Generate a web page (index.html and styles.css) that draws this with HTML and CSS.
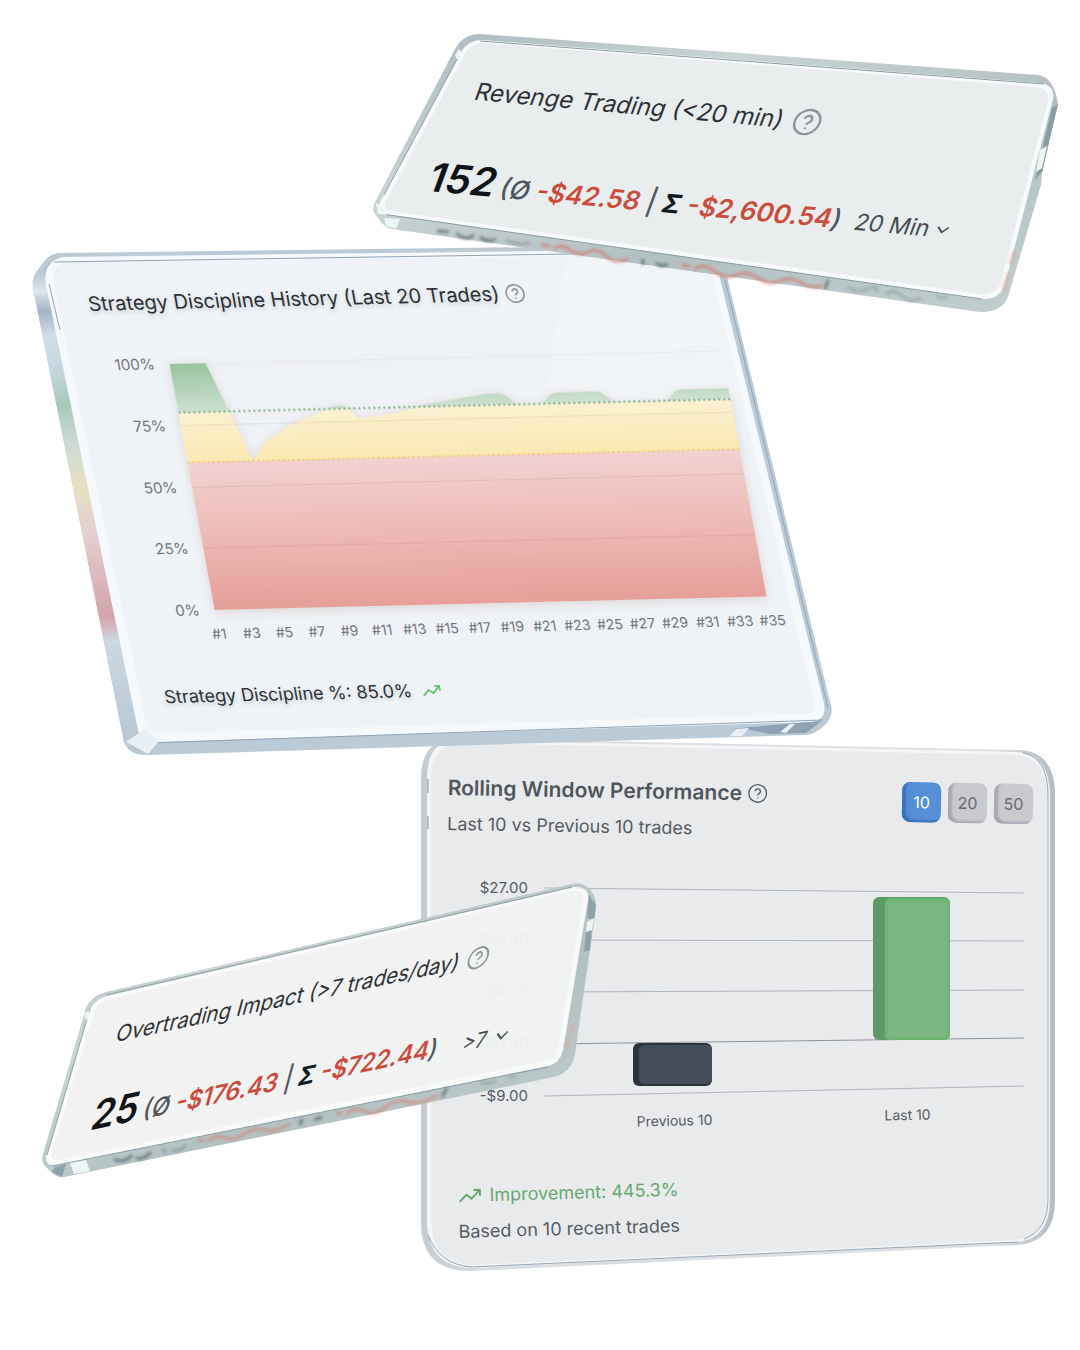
FILE: index.html
```html
<!DOCTYPE html>
<html lang="en">
<head>
    <meta charset="UTF-8">
    <meta name="viewport" content="width=device-width, initial-scale=1.0">
    <title>Trading Insights</title>
    <link rel="stylesheet" href="styles.css">
</head>
<body>
    <svg class="defs" aria-hidden="true">
        <symbol id="help" viewBox="0 0 24 24"><circle cx="12" cy="12" r="10.6"/><path d="M9 9.600a3.100 3.100 0 1 1 4.600 2.700c-1.100.6-1.600 1.100-1.600 2.200M12 16.800v1.400"/></symbol>
        <symbol id="chevron" viewBox="0 0 16 16"><path d="M2 5l6 6 6-6"/></symbol>
        <symbol id="trend" viewBox="0 0 24 16"><path d="M2 14l7-7 5 4 8-8M16 2.500h6.500v6"/></symbol>
        <linearGradient id="steel" x1="0" y1="0" x2="1" y2="1">
            <stop offset="0" stop-color="#a9b7ba"/><stop offset=".3" stop-color="#c9d3d4"/>
            <stop offset=".6" stop-color="#b3c0c2"/><stop offset="1" stop-color="#c2cecf"/>
        </linearGradient>
        <linearGradient id="silver" x1="0" y1="0" x2="1" y2="0">
            <stop offset="0" stop-color="#c3cbd0"/><stop offset=".1" stop-color="#d9dde1"/>
            <stop offset=".9" stop-color="#dfe2e5"/><stop offset="1" stop-color="#b4bbc3"/>
        </linearGradient>
        <linearGradient id="spectrum" x1="0" y1="0" x2="0" y2="1">
            <stop offset="0" stop-color="#a9b9c7"/><stop offset=".06" stop-color="#dbe5ec"/>
            <stop offset=".1" stop-color="#a3b3c2"/><stop offset=".15" stop-color="#d3dee7"/>
            <stop offset=".22" stop-color="#c6d5de"/><stop offset=".29" stop-color="#a6c8b8"/>
            <stop offset=".37" stop-color="#cddad8"/><stop offset=".45" stop-color="#e6e0c3"/>
            <stop offset=".55" stop-color="#e2d0d2"/><stop offset=".72" stop-color="#d5a3ab"/>
            <stop offset=".77" stop-color="#ccd7e0"/><stop offset="1" stop-color="#b7c6d2"/>
        </linearGradient>
        <filter id="soft" x="-5%" y="-40%" width="110%" height="180%"><feGaussianBlur stdDeviation="1.500"/></filter>
    </svg>

    <main class="stage">
        <section class="card rolling">
            <svg class="glass" viewBox="421 736 634 536" preserveAspectRatio="none" aria-hidden="true">
                <path fill="url(#silver)" d="M455 738L1020 750Q1055 752 1055 795V1200Q1055 1242 1018 1245L472 1271Q421 1272 421 1222V778Q421 740 455 738Z"/>
                <path fill="#f3f5f6" d="M455 740L1018 752Q1049 754 1050 795V1200Q1050 1238 1018 1242L472 1268Q428 1267 427 1222V778Q427 742 455 740Z"/>
                <path fill="#e9eaec" d="M460 743L1016 755Q1047 757 1047 796V1199Q1047 1236 1016 1240L474 1265Q432 1264 431 1220V780Q431 744 460 743Z"/>
                <path class="line" stroke="#9aa5b0" d="M1023 753Q1048 757 1048 796V1199Q1048 1230 1024 1239M428 1235Q440 1265 472 1267L1018 1242"/>
                <path class="line" stroke="#7d8792" stroke-width="2" d="M428 779V793M428 816V829"/>
            </svg>
            <header class="rolling-head">
                <div class="rolling-title">
                    <h2>Rolling Window Performance <button class="help" aria-label="About this chart"><svg><use href="#help"/></svg></button></h2>
                    <p>Last 10 vs Previous 10 trades</p>
                </div>
                <div class="sizes">
                    <button class="size active">10</button>
                    <button class="size">20</button>
                    <button class="size">50</button>
                </div>
            </header>
            <div class="rolling-chart">
                <div class="money"><span>$27.00</span><span>$18.00</span><span>$9.00</span><span>$0.00</span><span>-$9.00</span></div>
                <div class="plot">
                    <svg viewBox="544 876 480 232" aria-hidden="true">
                        <g class="line" stroke="#b0b5bc">
                            <path d="M544 888L1024 893M544 940L1024 941M544 992L1024 990M544 1096L1024 1086"/>
                            <path stroke="#8d939d" d="M544 1044L1024 1038"/>
                        </g>
                        <rect x="633" y="1043" width="79" height="43" rx="6" fill="#2c343d"/>
                        <rect x="639" y="1045" width="73" height="39" rx="5" fill="#454e58"/>
                        <rect x="873" y="897" width="77" height="143" rx="6" fill="#5e9969"/>
                        <rect x="885" y="898" width="65" height="142" rx="5" fill="#6cb673"/>
                        <rect x="888" y="901" width="59" height="136" rx="4" fill="#7db685"/>
                    </svg>
                    <div class="groups"><span>Previous 10</span><span>Last 10</span></div>
                </div>
            </div>
            <footer class="rolling-foot">
                <p class="up"><svg class="trend"><use href="#trend"/></svg>Improvement: 445.3%</p>
                <p>Based on 10 recent trades</p>
            </footer>
        </section>

        <section class="card discipline">
            <svg class="glass" viewBox="30 242 804 516" preserveAspectRatio="none" aria-hidden="true">
                <path fill="#bccad5" d="M58 253L700 245Q718 246 723 260L829 698Q836 714 825 725Q816 734 806 735L148 755Q129 756 124 742L33 288Q31 277 40 267Q48 254 58 253Z"/>
                <path fill="url(#spectrum)" d="M50 262L33 280V288L124 742L138 754L148 740L92 497Z"/>
                <path fill="#f6f9fc" d="M62 257L700 249Q712 249 716 262L824 704Q827 719 812 722L158 742Q142 743 138 730L46 285Q42 263 62 257Z"/>
                <path fill="#eff2f6" d="M66 262L698 255Q707 255 710 266L814 702Q816 713 804 714L166 733Q150 734 146 722L54 286Q49 266 66 262Z"/>
                <path fill="#f4f6f9" opacity=".7" d="M566 256L698 255Q707 255 710 266L740 400L546 402Z"/>
                <path class="line" stroke="#8fa3b6" d="M54 262L700 252M725 280L828 708M150 743L823 720"/>
                <path class="line" stroke="#8fa3b6" stroke-width="2" d="M49 284L60 330M735 729L770 727M775 733L808 724"/>
                <path fill="#8ea2b3" d="M740 728L822 721L806 733L770 734Z"/>
                <path fill="#e8f0f5" d="M780 732L790 724L795 724L786 733ZM736 729L749 728L742 736L730 736ZM126 742L146 728L158 742L148 754Z"/>
            </svg>
            <div class="tilt">
                <h2>Strategy Discipline History (Last 20 Trades) <button class="help" aria-label="About this chart"><svg><use href="#help"/></svg></button></h2>
                <div class="history">
                    <div class="percent"><span>100%</span><span>75%</span><span>50%</span><span>25%</span><span>0%</span></div>
                    <svg class="area" viewBox="0 0 552 247" aria-hidden="true">
                        <defs>
                            <clipPath id="trace"><path d="M0 0H36L64 94Q66 100 69 96Q80 78 91 75Q110 63 129 57Q145 51 157 46Q165 44 171 50L179 59Q200 57 219 54Q232 51 246 47L300 39Q325 35 330 41L339 49H364L372 41Q375 38 382 38H420Q424 38 428 42L436 49H490L497 41Q500 38 506 38H552V247H0Z"/></clipPath>
                            <linearGradient id="good" x1="0" y1="0" x2="0" y2="1"><stop offset="0" stop-color="#98c3a0"/><stop offset="1" stop-color="#cfe0d2"/></linearGradient>
                            <linearGradient id="fair" x1="0" y1="0" x2="0" y2="1"><stop offset="0" stop-color="#fbf1d2"/><stop offset="1" stop-color="#f9e9b0"/></linearGradient>
                            <linearGradient id="poor" x1="0" y1="0" x2="0" y2="1"><stop offset="0" stop-color="#f1d2d2"/><stop offset=".4" stop-color="#edbfbc"/><stop offset="1" stop-color="#e69f9a"/></linearGradient>
                        </defs>
                        <path class="line" stroke="#dde1e5" d="M36 0H552"/>
                        <g clip-path="url(#trace)">
                            <rect width="552" height="49" fill="url(#good)"/>
                            <rect y="49" width="552" height="50" fill="url(#fair)"/>
                            <rect y="99" width="552" height="148" fill="url(#poor)"/>
                        </g>
                        <path class="line" stroke="#8a6a6a" opacity=".14" d="M0 62H552M0 124H552M0 185H552"/>
                        <path class="dots" stroke="#7daf88" d="M0 49H552"/>
                        <path class="dots" stroke="#f0cd6b" d="M0 99H552"/>
                    </svg>
                </div>
                <div class="trades">
                    <span>#1</span><span>#3</span><span>#5</span><span>#7</span><span>#9</span><span>#11</span><span>#13</span><span>#15</span><span>#17</span><span>#19</span><span>#21</span><span>#23</span><span>#25</span><span>#27</span><span>#29</span><span>#31</span><span>#33</span><span>#35</span>
                </div>
                <p class="score">Strategy Discipline %: 85.0% <svg class="trend"><use href="#trend"/></svg></p>
            </div>
        </section>

        <section class="card revenge">
            <svg class="glass" viewBox="370 32 690 282" preserveAspectRatio="none" aria-hidden="true">
                <path fill="url(#steel)" d="M480 34L1038 75Q1054 77 1058 104L1042 172L1041 185L1008 297Q1001 313 980 312L392 229Q386 228 381 222L374 213Q372 208 376 200L455 49Q463 34 480 34Z"/>
                <path fill="#f7fafa" d="M482 40L1040 83Q1055 85 1053 99L1005 284Q1000 300 982 299L384 214Q375 212 380 202L461 52Q468 40 482 40Z"/>
                <path fill="#e9edee" d="M484 43L1036 87Q1050 89 1048 101L1001 282Q997 295 980 294L390 211Q382 209 386 201L465 54Q471 43 484 43Z"/>
                <path class="line" stroke="#8d9da1" d="M480 41L1044 84M382 214L982 299M384 195L461 52M1042 172L1050 120"/>
                <path fill="#8b9ca3" d="M1052 108L1058 104L1042 172L1035 180Z"/>
                <path fill="#eef4f4" d="M1040 150L1047 146L1042 168L1036 172ZM376 203L382 206L386 215L378 214ZM384 218L400 219L396 229L386 226ZM455 55L459 49L462 53L457 60Z"/>
                <g class="smudge" filter="url(#soft)">
                    <path stroke="#59656b" d="M437 231L449 232M456 233Q466 242 474 235M480 237Q488 243 496 239"/>
                    <path stroke="#8e999d" d="M506 240Q516 246 530 243"/>
                    <path stroke="#d07c72" d="M541 245L550 246M554 249Q560 243 570 250T588 252T606 256T628 259M682 265L690 266M694 270Q702 262 714 271T736 275T758 278T780 281T802 283T822 285"/>
                    <path stroke="#59656b" d="M643 259V265M656 263Q662 268 668 264M828 280L825 289"/>
                    <path stroke="#98a4a8" d="M848 286Q856 294 868 289T876 292M886 294Q894 288 902 296T922 298M936 295L941 298L948 297"/>
                    <path stroke="#dfa9a2" d="M1015 250L1010 264M1009 272L1003 290"/>
                </g>
            </svg>
            <div class="tilt">
                <h2>Revenge Trading (&lt;20 min) <button class="help" aria-label="About revenge trading"><svg><use href="#help"/></svg></button></h2>
                <div class="figures">
                    <strong>152</strong>
                    <p>(Ø <span class="loss">-$42.58</span> | <b>Σ</b> <span class="loss">-$2,600.54</span>)</p>
                    <label class="pick"><select aria-label="Time window"><option>20 Min</option></select><svg><use href="#chevron"/></svg></label>
                </div>
            </div>
        </section>

        <section class="card overtrading">
            <svg class="glass" viewBox="40 882 558 298" preserveAspectRatio="none" aria-hidden="true">
                <path fill="url(#steel)" fill-rule="evenodd" d="M106 992L572 884Q580 882 586 886Q597 894 596 908L575 1054Q572 1072 554 1077L64 1177Q57 1178 52 1173L44 1165Q41 1161 43 1154L86 1008Q91 996 106 992ZM108 996Q95 999 90 1010L47 1154Q44 1167 56 1165L548 1066Q560 1063 563 1050L588 899Q589 886 574 887Z"/>
                <path fill="#f9fafa" fill-opacity=".88" d="M108 996L574 887Q589 886 588 899L563 1050Q560 1063 548 1066L56 1165Q44 1167 47 1154L90 1010Q95 999 108 996Z"/>
                <path fill="#efefef" fill-opacity=".75" d="M110 999L570 891Q585 889 583 901L558 1048Q556 1059 545 1061L60 1160Q49 1161 52 1152L94 1012Q98 1002 110 999Z"/>
                <path class="line" stroke="#8fa0a4" d="M106 995L572 887M47 1155L90 1009M52 1166L548 1067"/>
                <path fill="#8fa2a8" d="M589 895L596 905L594 920L587 918ZM586 932L592 925L590 950L584 952ZM55 1167L66 1164L62 1177L52 1172Z"/>
                <path fill="#eef4f4" d="M587 922L594 918L592 930L586 932ZM70 1163L86 1160L90 1171L74 1174ZM84 1014L89 1010L90 1017L86 1020Z"/>
                <g class="smudge" filter="url(#soft)">
                    <path stroke="#59656b" d="M114 1159Q124 1164 132 1155M136 1158Q144 1160 151 1152"/>
                    <path stroke="#8b979b" d="M163 1148L166 1154M172 1150Q180 1152 186 1145"/>
                    <path stroke="#d08a80" d="M198 1141L204 1140M208 1141Q216 1134 224 1138T244 1134T264 1130T290 1124M336 1114L342 1113M346 1115Q354 1106 364 1111T386 1107T408 1102T438 1095"/>
                    <path stroke="#59656b" d="M302 1119L300 1125M314 1120L322 1117M447 1088L442 1097"/>
                    <path stroke="#98a4a8" d="M480 1083Q488 1085 496 1080M508 1077L516 1077"/>
                    <path stroke="#dfa49c" d="M573 1024L571 1034M569 1038L566 1048"/>
                </g>
            </svg>
            <div class="tilt">
                <h2>Overtrading Impact (&gt;7 trades/day) <button class="help" aria-label="About overtrading"><svg><use href="#help"/></svg></button></h2>
                <div class="figures">
                    <strong>25</strong>
                    <p>(Ø <span class="loss">-$176.43</span> | <b>Σ</b> <span class="loss">-$722.44</span>)</p>
                    <label class="pick"><select aria-label="Trades per day"><option>&gt;7</option></select><svg><use href="#chevron"/></svg></label>
                </div>
            </div>
        </section>
    </main>
</body>
</html>
```

FILE: styles.css
```css
*{
    box-sizing: border-box;
    margin: 0;
    padding: 0;
}
body{
    background-color: #ffffff;
    color: #2d3136;
    font-family: Inter, "Open Sans", sans-serif;
}
button, select{
    font: inherit;
    color: inherit;
    border: 0;
    background: none;
}
h2{
    display: flex;
    align-items: center;
    font-weight: 400;
    white-space: nowrap;
}
.defs{
    position: absolute;
    width: 0;
    height: 0;
}
.stage{
    position: relative;
    max-width: 1080px;
    aspect-ratio: 4 / 5;
}

/* glass panels scattered over the stage */
.card{
    position: absolute;
}
.glass{
    position: absolute;
    inset: 0;
    width: 100%;
    height: 100%;
    overflow: visible;
}
.line{
    fill: none;
    stroke-width: 1;
}
.smudge{
    fill: none;
    stroke-width: 3;
    opacity: .75;
}
.tilt{
    position: relative;
    width: max-content;
    transform-origin: 0 0;
}
.help{
    display: flex;
    color: #8f959b;
}
.help svg{
    width: 20px;
    height: 20px;
    overflow: visible;
    fill: none;
    stroke: currentColor;
    stroke-width: 2;
}
.trend{
    width: 20px;
    height: 16px;
    fill: none;
    stroke: #5dc06c;
    stroke-width: 2;
}

/* revenge + overtrading */
.figures{
    display: flex;
    align-items: baseline;
    white-space: nowrap;
}
.figures strong{
    color: #101417;
    font-weight: 600;
}
.figures p{
    color: #50575f;
    font-weight: 500;
}
.figures b{
    color: #101c24;
    font-weight: 700;
}
.figures .loss{
    color: #cb4b3c;
    font-weight: 600;
}
.pick{
    display: flex;
    align-items: center;
    color: #454b50;
}
.pick select{
    appearance: none;
}
.pick svg{
    width: 14px;
    height: 14px;
    fill: none;
    stroke: currentColor;
    stroke-width: 2;
}
.revenge{
    left: 370px;
    top: 32px;
    width: 690px;
    height: 282px;
    padding: 44px 97px;
}
.revenge .tilt{
    transform: rotate(5.2deg) skewX(-15deg);
}
.revenge h2{
    gap: 10px;
    padding-left: 14px;
    margin-bottom: 50px;
    font-size: 24px;
    line-height: 30px;
}
.revenge .help svg{
    width: 28px;
    height: 28px;
}
.revenge .figures{
    gap: 6px;
    font-size: 26px;
    line-height: 48px;
}
.revenge strong{
    font-size: 40px;
}
.revenge .pick{
    gap: 6px;
    margin-left: 8px;
    font-size: 23px;
}

.overtrading{
    left: 40px;
    top: 882px;
    width: 558px;
    height: 298px;
    padding: 140px 78px;
}
.overtrading .tilt{
    transform: rotate(-12deg) skewX(-27deg);
}
.overtrading h2{
    gap: 8px;
    padding-left: 2px;
    margin-bottom: 42px;
    font-size: 21px;
    line-height: 24px;
}
.overtrading .help svg{
    width: 22px;
    height: 22px;
}
.overtrading .figures{
    gap: 6px;
    font-size: 24px;
    line-height: 40px;
}
.overtrading strong{
    font-size: 38px;
}
.overtrading .pick{
    gap: 8px;
    margin-left: 20px;
    font-size: 20px;
}

/* strategy discipline */
.discipline{
    left: 30px;
    top: 242px;
    width: 804px;
    height: 516px;
    padding: 50px 56px;
}
.discipline .tilt{
    transform: rotate(-1.4deg) skewX(9deg);
}
.discipline h2{
    gap: 6px;
    margin-bottom: 50px;
    font-size: 20px;
    line-height: 24px;
    text-shadow: 0 2px 4px #c5ccd3;
}
.history{
    display: flex;
    gap: 15px;
}
.percent{
    display: flex;
    flex-direction: column;
    justify-content: space-between;
    width: 55px;
    margin: -10px 0;
    color: #73777c;
    font-size: 15px;
    line-height: 20px;
    text-align: right;
}
.area{
    width: 552px;
    height: 247px;
    filter: drop-shadow(0 2px 5px #dcd3d3);
}
.dots{
    fill: none;
    stroke-width: 2;
    stroke-dasharray: 2 3;
}
.trades{
    display: flex;
    width: 586px;
    margin: 14px 0 0 54px;
    color: #73777c;
    font-size: 14px;
    line-height: 20px;
    text-align: center;
}
.trades span{
    flex: 1;
}
.score{
    display: flex;
    align-items: center;
    gap: 10px;
    margin: 40px 0 0 4px;
    font-size: 18px;
    line-height: 24px;
    text-shadow: 0 2px 4px #c5ccd3;
}

/* rolling window */
.rolling{
    left: 421px;
    top: 736px;
    width: 634px;
    height: 536px;
    padding: 38px 22px 28px 27px;
    color: #565c63;
}
.rolling-head{
    position: relative;
    display: flex;
    justify-content: space-between;
}
.rolling-title{
    transform: rotate(1deg);
    transform-origin: 0 0;
}
.rolling-title h2{
    gap: 6px;
    font-size: 21px;
    line-height: 28px;
    font-weight: 600;
    color: #50565e;
}
.rolling-title p{
    margin-top: 8px;
    font-size: 18px;
    line-height: 28px;
}
.rolling .help{
    color: #565c63;
}
.rolling .help svg{
    stroke-width: 1;
    stroke-width: 1.6;
}
.sizes{
    display: flex;
    gap: 7px;
    padding-top: 9px;
    transform: rotate(1deg);
}
.size{
    width: 39px;
    height: 40px;
    border-radius: 8px;
    background-color: #c9c9ce;
    box-shadow: inset 4px -2px 2px #a6a9b5;
    font-size: 16px;
    color: #666a70;
}
.size.active{
    background-color: #5590d6;
    box-shadow: inset 4px -2px 2px #3a73bb;
    color: #ffffff;
}
.rolling-chart{
    position: relative;
    display: flex;
    gap: 16px;
    margin-top: 38px;
}
.money{
    display: flex;
    flex-direction: column;
    width: 80px;
    font-size: 15px;
    line-height: 20px;
    gap: 32px;
    padding-top: 2px;
    text-align: right;
}
.plot{
    flex: 1;
    padding-right: 9px;
}
.plot svg{
    display: block;
    width: 100%;
}
.groups{
    display: flex;
    padding-left: 14px;
    transform: rotate(-1.4deg);
    font-size: 14px;
    line-height: 20px;
    text-align: center;
}
.groups span{
    flex: 1;
}
.rolling-foot{
    position: relative;
    margin: 50px 9px 0;
    font-size: 18px;
    line-height: 36px;
    transform: rotate(-1.6deg);
    transform-origin: 0 0;
}
.up{
    display: flex;
    align-items: center;
    gap: 8px;
    color: #6aa873;
}
.up .trend{
    width: 24px;
    stroke: #6aa873;
}
```
